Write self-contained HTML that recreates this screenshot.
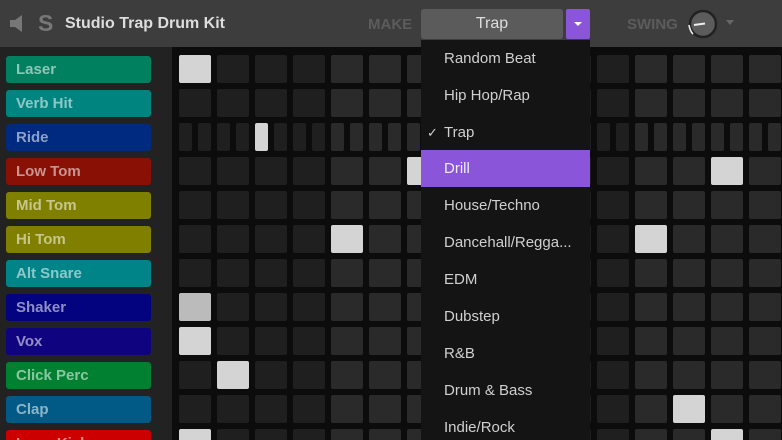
<!DOCTYPE html>
<html><head><meta charset="utf-8"><style>
*{margin:0;padding:0;box-sizing:border-box}
html,body{width:782px;height:440px;overflow:hidden}
body{background:#0c0c0c;font-family:"Liberation Sans",sans-serif;position:relative}
#hdr{position:absolute;left:0;top:0;width:782px;height:47px;background:#3d3d3d}
#left{position:absolute;left:0;top:47px;width:172px;height:393px;background:#222}
.lab{position:absolute;left:6px;width:145px;height:27px;border-radius:3px;color:rgba(255,255,255,.55);font-weight:bold;font-size:15px;line-height:27px;padding-left:10px}
.c{position:absolute;border-radius:2px}
#dd{position:absolute;left:421px;top:40px;width:169px;height:400px;background:#141414}
.it{position:absolute;left:0;width:169px;height:37px;line-height:37px;padding-left:23px;color:#d0d0d0;font-size:15px}
#wrap{position:absolute;left:0;top:0;width:782px;height:440px;overflow:hidden}
</style></head><body><div id="wrap">
<div id="hdr">
<svg style="position:absolute;left:10px;top:15px" width="14" height="17" viewBox="0 0 14 17"><path d="M0 5h5l7-5v17l-7-5H0z" fill="#777"/></svg>
<div style="position:absolute;left:38px;top:10px;font-size:23px;font-weight:bold;color:#777">S</div>
<div style="position:absolute;left:65px;top:15px;font-size:16px;font-weight:bold;color:#ddd">Studio Trap Drum Kit</div>
<div style="position:absolute;left:368px;top:16px;font-size:15px;font-weight:bold;color:#5c5c5c">MAKE</div>
<div style="position:absolute;left:421px;top:9px;width:142px;height:30px;background:#5b5b5b;border-radius:3px;color:#ddd;font-size:16px;text-align:center;line-height:29px">Trap</div>
<div style="position:absolute;left:566px;top:9px;width:24px;height:30px;background:#8a55d8;border-radius:2px"><div style="position:absolute;left:8px;top:13px;border-left:4px solid transparent;border-right:4px solid transparent;border-top:4px solid #fff"></div></div>
<div style="position:absolute;left:627px;top:16px;font-size:15px;font-weight:bold;color:#5c5c5c">SWING</div>
<svg style="position:absolute;left:684px;top:5px" width="40" height="36" viewBox="0 0 40 36"><circle cx="19" cy="19" r="13" fill="#5c5c5c" stroke="#222" stroke-width="2.5"/><path d="M10 20L21 18.5" stroke="#eee" stroke-width="2"/><path d="M5 20Q6 26 9 29" stroke="#eee" stroke-width="1.6" fill="none"/></svg>
<div style="position:absolute;left:726px;top:20px;border-left:4px solid transparent;border-right:4px solid transparent;border-top:5px solid #666"></div>
</div>
<div id="left"></div>
<div id="g"></div>
<div id="dd">
<div class="it" style="top:0">Random Beat</div>
<div class="it" style="top:37px">Hip Hop/Rap</div>
<div class="it" style="top:74px"><span style="position:absolute;left:6px;font-size:13px">✓</span>Trap</div>
<div class="it" style="top:110px;background:#8a55d8;color:#eee">Drill</div>
<div class="it" style="top:147px">House/Techno</div>
<div class="it" style="top:184px">Dancehall/Regga...</div>
<div class="it" style="top:221px">EDM</div>
<div class="it" style="top:258px">Dubstep</div>
<div class="it" style="top:295px">R&amp;B</div>
<div class="it" style="top:332px">Drum &amp; Bass</div>
<div class="it" style="top:369px">Indie/Rock</div>
</div>
</div>
<script>
var labs=[["Laser","#00805f"],["Verb Hit","#008480"],["Ride","#002a80"],["Low Tom","#881005"],["Mid Tom","#808000"],["Hi Tom","#807f00"],["Alt Snare","#008487"],["Shaker","#03037f"],["Vox","#10037f"],["Click Perc","#008030"],["Clap","#005a85"],["Long Kick","#cc0000"]];
var act={0:[0],3:[6,14],5:[4,12],7:[0],8:[0],9:[1],10:[13],11:[0,14]};
var h="";
for(var r=0;r<12;r++){var y=55+r*34;
h+='<div class="lab" style="top:'+(y+1)+'px;background:'+labs[r][1]+'">'+labs[r][0]+'</div>';
if(r==2){for(var k=0;k<32;k++){var x=179+k*19;var g=Math.floor(k/8)%2;var col=k==4?"#d4d4d4":(g?"#2a2a2a":"#1f1f1f");h+='<div class="c" style="left:'+x+'px;top:'+y+'px;width:13px;height:28px;background:'+col+'"></div>';}}
else{for(var k=0;k<16;k++){var x=179+k*38;var g=Math.floor(k/4)%2;var a=act[r]&&act[r].indexOf(k)>=0;var col=a?(r==7?"#bbbbbb":"#d4d4d4"):(g?"#2a2a2a":"#1f1f1f");h+='<div class="c" style="left:'+x+'px;top:'+y+'px;width:32px;height:28px;background:'+col+'"></div>';}}
}
document.getElementById("g").innerHTML=h;
</script>
</body></html>
